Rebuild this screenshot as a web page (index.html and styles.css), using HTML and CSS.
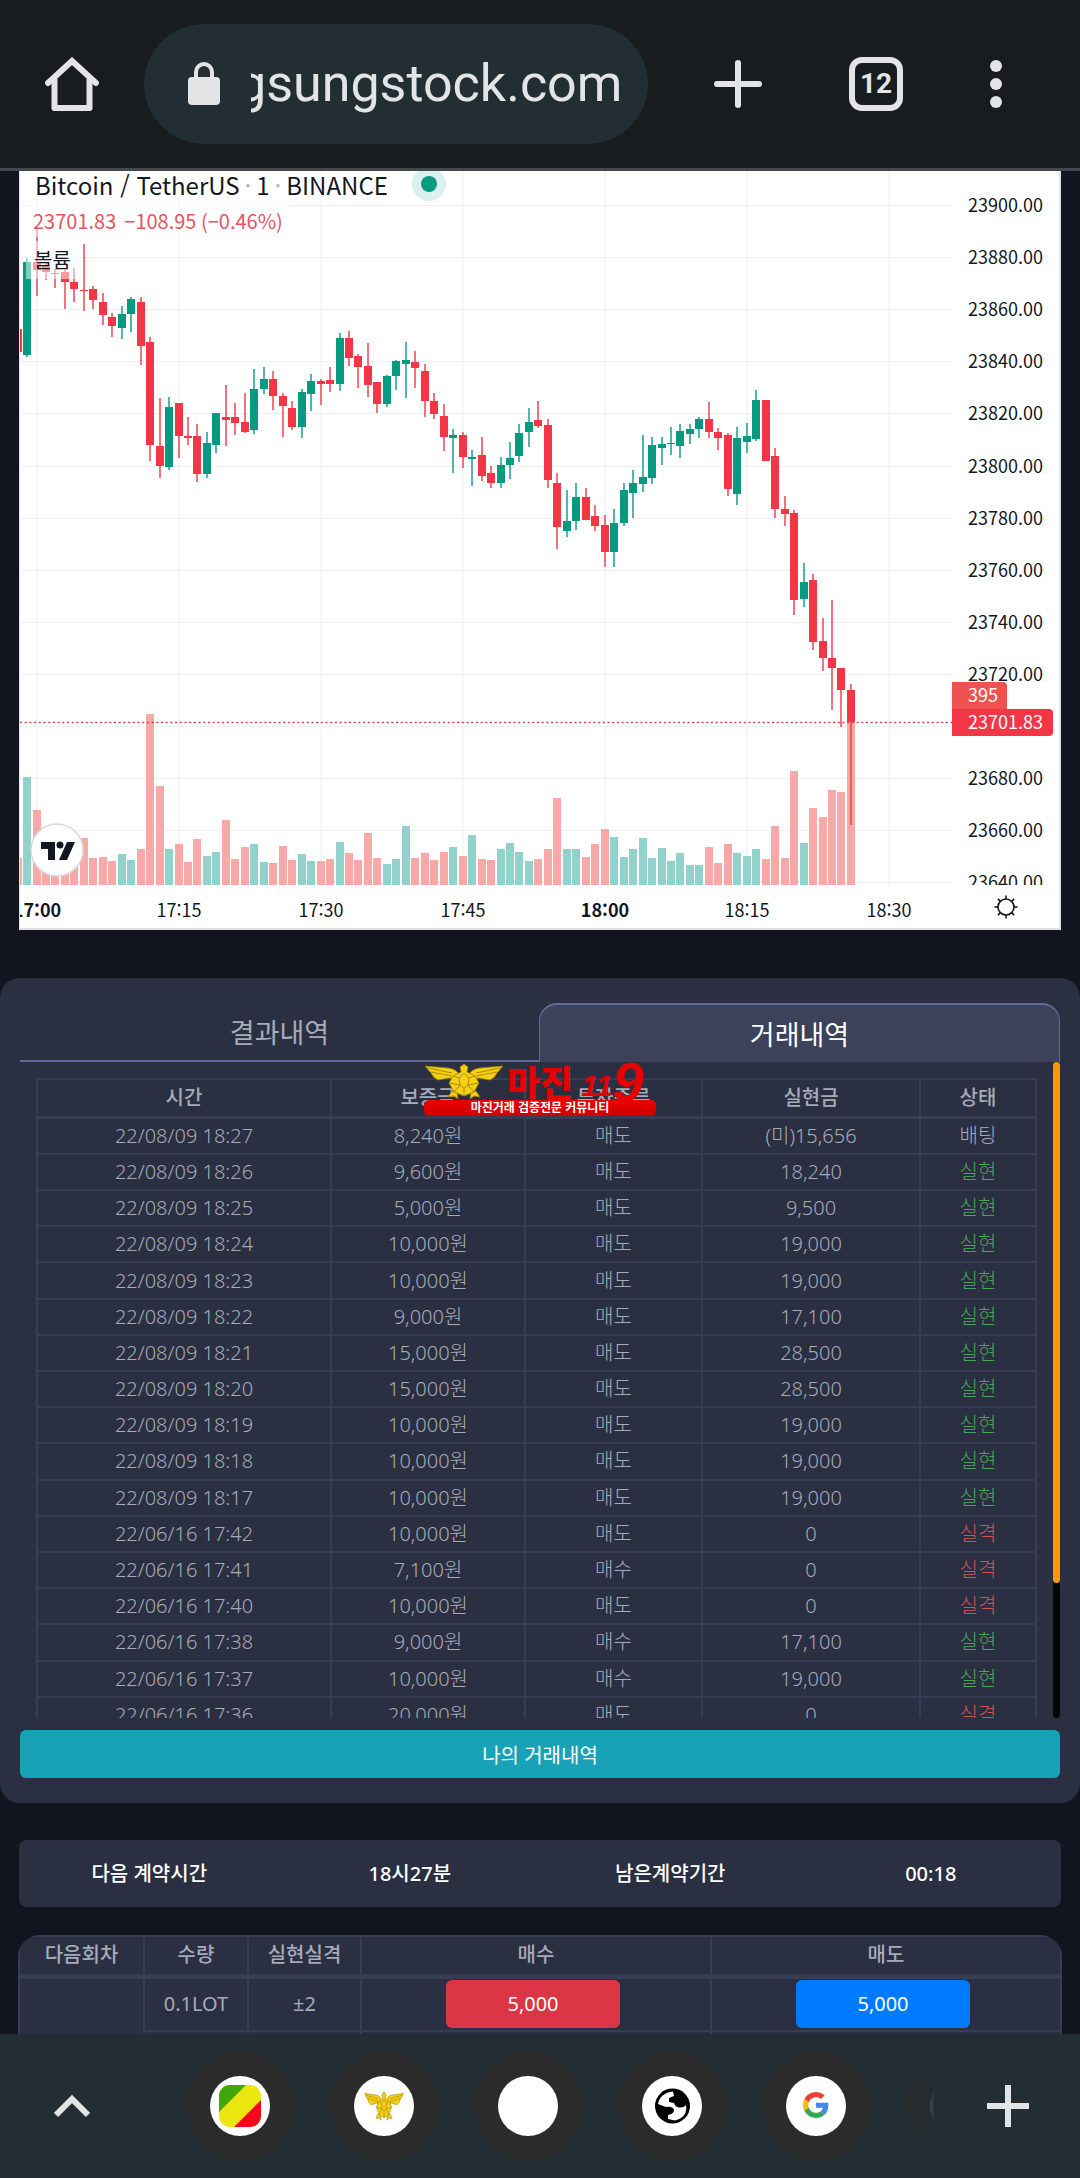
FILE: index.html
```
<!DOCTYPE html>
<html lang="ko">

<head>
    <meta charset="UTF-8">
    <meta name="viewport" content="width=device-width, initial-scale=1.0">
    <title>거래내역</title>
    <link rel="stylesheet" href="styles.css">
</head>

<body>
    <!-- Shared emblem -->
    <svg class="defs" width="0" height="0" aria-hidden="true">
        <symbol id="eagle" viewBox="0 0 80 37" preserveAspectRatio="none">
            <g fill="#f5cf12" stroke="#9c7a08" stroke-width="0.8" stroke-linejoin="round">
                <path d="M1 3 L24 5 Q32 6 35 11 L33 18 L26 15 L14 17 Q9 15 7 10 Z" />
                <path d="M79 3 L56 5 Q48 6 45 11 L47 18 L54 15 L66 17 Q71 15 73 10 Z" />
                <path d="M28 28 L24 34 L30 33 L34 36 L33 29 Z" />
                <path d="M52 28 L56 34 L50 33 L46 36 L47 29 Z" />
                <path d="M36 4 L40 1 L44 4 L43 9 L51 13 L55 20 L50 29 L40 33 L30 29 L25 20 L29 13 L37 9 Z" />
                <path d="M40 10 L45 15 L44 22 L40 25 L36 22 L35 15 Z" />
                <path d="M4 5 L28 10 M7 9 L28 13 M76 5 L52 10 M73 9 L52 13" fill="none" />
                <path d="M29 13 L35 15 M51 13 L45 15 M25 20 L36 22 L30 29 M55 20 L44 22 L50 29 M40 25 V33" fill="none" />
            </g>
        </symbol>
    </svg>

    <!-- Address bar -->
    <header class="top-bar">
        <button class="icon-btn" aria-label="홈">
            <svg width="54" height="54" viewBox="0 0 54 54" fill="none" stroke="#e3e4e6" stroke-width="6">
                <path d="M3 26 L27 4 L51 26" stroke-linecap="round" />
                <path d="M9.500 22 V51 H44.500 V22" stroke-linejoin="round" />
            </svg>
        </button>
        <div class="url-box">
            <svg width="32" height="44" viewBox="0 0 32 44">
                <rect x="0" y="15" width="32" height="28" rx="4" fill="#e3e4e6" />
                <path d="M8 17 V10 A8 8 0 0 1 24 10 V17" fill="none" stroke="#e3e4e6" stroke-width="4" />
            </svg>
            <input class="url-input" type="text" aria-label="주소" value="gsungstock.com">
        </div>
        <div class="top-actions">
            <button class="icon-btn" aria-label="새 탭">
                <svg width="48" height="48" viewBox="0 0 48 48" stroke="#e3e4e6" stroke-width="6" stroke-linecap="round">
                    <path d="M24 3 V45 M3 24 H45" />
                </svg>
            </button>
            <button class="tab-count">12</button>
            <button class="icon-btn" aria-label="메뉴">
                <svg width="12" height="48" viewBox="0 0 12 48" fill="#e3e4e6">
                    <circle cx="6" cy="6" r="6" />
                    <circle cx="6" cy="24" r="6" />
                    <circle cx="6" cy="42" r="6" />
                </svg>
            </button>
        </div>
    </header>

    <main class="page">
        <!-- Chart -->
        <section class="chart">
            <svg id="chartSvg" viewBox="0 0 1039 757"></svg>
            <div class="legend">
                <div class="legend-title">Bitcoin / TetherUS <i>·</i> 1 <i>·</i> BINANCE <span class="live-dot"></span></div>
                <div class="legend-price"><span>23701.83</span><span>−108.95 (−0.46%)</span></div>
                <div class="legend-volume">볼륨</div>
            </div>
        </section>

        <!-- History -->
        <section class="history">
            <div class="tabs">
                <button class="tab">결과내역</button>
                <button class="tab active">거래내역</button>
            </div>
            <div class="history-body">
                <div class="history-scroll">
                    <table class="history-table">
                        <thead>
                            <tr>
                                <th class="col-time">시간</th>
                                <th class="col-deposit">보증금</th>
                                <th class="col-type">투자종류</th>
                                <th class="col-profit">실현금</th>
                                <th>상태</th>
                            </tr>
                        </thead>
                        <tbody id="historyRows"></tbody>
                    </table>
                </div>
                <div class="scroll-track"><div class="scroll-thumb"></div></div>
            </div>
            <button class="my-history">나의 거래내역</button>

            <div class="watermark">
                <div class="watermark-top">
                    <svg width="80" height="37"><use href="#eagle" /></svg>
                    <span class="watermark-name">마진</span>
                    <span class="watermark-11">11</span>
                    <span class="watermark-9">9</span>
                </div>
                <div class="watermark-bar">마진거래 검증전문 커뮤니티</div>
            </div>
        </section>

        <!-- Next contract -->
        <section class="contract">
            <span>다음 계약시간</span>
            <span>18시27분</span>
            <span>남은계약기간</span>
            <span>00:18</span>
        </section>

        <!-- Order table -->
        <section class="order">
            <table class="order-table">
                <thead>
                    <tr>
                        <th class="col-round">다음회차</th>
                        <th class="col-lot">수량</th>
                        <th class="col-tick">실현실격</th>
                        <th>매수</th>
                        <th>매도</th>
                    </tr>
                </thead>
                <tbody>
                    <tr>
                        <td rowspan="2"></td>
                        <td>0.1LOT</td>
                        <td>±2</td>
                        <td class="order-cell"><button class="order-btn buy">5,000</button></td>
                        <td class="order-cell"><button class="order-btn sell">5,000</button></td>
                    </tr>
                    <tr>
                        <td></td>
                        <td></td>
                        <td class="order-cell"><button class="order-btn buy" aria-label="매수"></button></td>
                        <td class="order-cell"><button class="order-btn sell" aria-label="매도"></button></td>
                    </tr>
                </tbody>
            </table>
        </section>
    </main>

    <!-- Tab strip -->
    <nav class="bottom-bar">
        <button class="icon-btn" aria-label="펼치기">
            <svg width="36" height="24" viewBox="0 0 36 24" fill="none" stroke="#e3e4e6" stroke-width="6">
                <path d="M2 21 L18 5 L34 21" />
            </svg>
        </button>
        <div class="sites">
            <button class="site" aria-label="사이트 1">
                <svg width="60" height="60" viewBox="0 0 60 60">
                    <circle cx="30" cy="30" r="30" fill="#fff" />
                    <clipPath id="flagClip"><rect x="9" y="9" width="42" height="42" rx="11" /></clipPath>
                    <g clip-path="url(#flagClip)">
                        <rect x="9" y="9" width="42" height="42" fill="#ebe60f" />
                        <path d="M9 9 H36 L9 36 Z" fill="#41a60a" />
                        <path d="M51 24 V51 H24 Z" fill="#f7061d" />
                    </g>
                </svg>
            </button>
            <button class="site" aria-label="사이트 2">
                <svg width="60" height="60" viewBox="0 0 60 60">
                    <circle cx="30" cy="30" r="30" fill="#fff" />
                    <use href="#eagle" x="10" y="15" width="40" height="30" />
                </svg>
            </button>
            <button class="site" aria-label="사이트 3">
                <svg width="60" height="60" viewBox="0 0 60 60">
                    <circle cx="30" cy="30" r="30" fill="#fff" />
                </svg>
            </button>
            <button class="site" aria-label="사이트 4">
                <svg width="60" height="60" viewBox="0 0 60 60">
                    <circle cx="30" cy="30" r="30" fill="#fff" />
                    <circle cx="30.500" cy="30" r="17.500" fill="#000" />
                    <path d="M16 28 Q18 17 31 15.500 L32 20 L27 22 V26 L32 27 Q33 31 37 31.500 Q42 32 44 29 Q46 41 33 44.500 L26 43 V39 Q32 38 32 34 Q31 30 24 31 Z" fill="#fff" />
                </svg>
            </button>
            <button class="site" aria-label="Google">
                <svg width="60" height="60" viewBox="0 0 60 60">
                    <circle cx="30" cy="30" r="30" fill="#fff" />
                    <g transform="translate(17 16) scale(0.540)">
                        <path fill="#e94335" d="M24 9.500c3.540 0 6.710 1.220 9.210 3.600l6.850-6.850C35.900 2.380 30.470 0 24 0 14.620 0 6.510 5.380 2.560 13.220l7.980 6.190C12.430 13.720 17.740 9.500 24 9.500z" />
                        <path fill="#4285f4" d="M46.980 24.550c0-1.570-.15-3.090-.38-4.550H24v9.020h12.940c-.58 2.960-2.260 5.480-4.780 7.180l7.730 6c4.510-4.180 7.090-10.360 7.090-17.650z" />
                        <path fill="#fbbc05" d="M10.530 28.590c-.48-1.450-.76-2.990-.76-4.590s.27-3.140.76-4.590l-7.980-6.190C.92 16.460 0 20.120 0 24c0 3.880.92 7.540 2.560 10.780l7.970-6.190z" />
                        <path fill="#34a853" d="M24 48c6.480 0 11.930-2.130 15.890-5.810l-7.730-6c-2.150 1.450-4.920 2.300-8.160 2.300-6.260 0-11.570-4.220-13.470-9.910l-7.980 6.190C6.510 42.620 14.620 48 24 48z" />
                    </g>
                </svg>
            </button>
            <button class="site" aria-label="사이트 6">
                <svg width="60" height="60" viewBox="0 0 60 60">
                    <circle cx="30" cy="30" r="30" fill="#fff" />
                </svg>
            </button>
        </div>
        <button class="icon-btn" aria-label="추가">
            <svg width="42" height="42" viewBox="0 0 42 42" stroke="#e3e4e6" stroke-width="6">
                <path d="M21 0 V42 M0 21 H42" />
            </svg>
        </button>
    </nav>

    <script src="script.js"></script>
</body>

</html>
```
FILE: styles.css
```
* {
    box-sizing: border-box;
}

body {
    margin: 0;
    height: 100vh;
    display: flex;
    flex-direction: column;
    overflow: hidden;
    background-color: #12151f;
    color: #a6abb8;
    font-family: "Noto Sans", "Noto Sans CJK KR", sans-serif;
    font-size: 20px;
}

button {
    font: inherit;
    border: none;
    padding: 0;
    background: none;
    color: inherit;
    cursor: pointer;
}

svg {
    display: block;
}

.defs {
    position: absolute;
}

/* Address bar */
.top-bar {
    flex: none;
    display: flex;
    align-items: center;
    height: 171px;
    padding: 0 78px 0 45px;
    background-color: #181c1f;
    border-bottom: 3px solid #41494f;
}

.url-box {
    flex: 1;
    display: flex;
    align-items: center;
    min-width: 0;
    height: 120px;
    margin-left: 45px;
    padding: 0 20px 0 44px;
    gap: 31px;
    border-radius: 60px;
    background-color: #222e34;
}

.url-box svg {
    flex: none;
}

.url-input {
    flex: 1;
    min-width: 0;
    padding: 0;
    border: none;
    outline: none;
    background: none;
    color: #e3e4e6;
    font-family: Roboto, sans-serif;
    font-size: 52px;
    line-height: 64px;
    text-indent: -14px;
}

.top-actions {
    display: flex;
    align-items: center;
    gap: 87px;
    margin-left: 66px;
}

.tab-count {
    width: 54px;
    height: 54px;
    border: 6px solid #e3e4e6;
    border-radius: 13px;
    color: #e3e4e6;
    font-family: Roboto, sans-serif;
    font-size: 28px;
    font-weight: bold;
    line-height: 42px;
}

.page {
    flex: 1;
    min-height: 0;
    overflow: hidden;
}

/* Chart */
.chart {
    position: relative;
    margin: 0 19px 48px;
    border: solid #dfe1e6;
    border-width: 0 2px 2px 1px;
    background-color: #fff;
    color: #131722;
    font-family: "Noto Sans CJK KR", sans-serif;
}

.chart svg {
    width: 100%;
    height: auto;
    font-size: 18px;
}

.chart text {
    fill: #131722;
}

.chart .axis-bold {
    font-weight: bold;
}

.chart .tag-text {
    fill: #fff;
}

.legend {
    position: absolute;
    top: 0;
    left: 6px;
    display: flex;
    flex-direction: column;
    align-items: flex-start;
}

.legend > div {
    padding: 0 8px;
    background-color: rgba(255, 255, 255, 0.5);
}

.legend .legend-title {
    display: flex;
    align-items: center;
    gap: 5px;
    height: 26px;
    padding-left: 9px;
    font-size: 24px;
}

.legend-title i {
    color: #b2b5be;
    font-style: normal;
}

.live-dot {
    width: 16px;
    height: 16px;
    margin-left: 28px;
    border-radius: 50%;
    background-color: #089981;
    box-shadow: 0 0 0 9px #dcf1ee;
}

.legend .legend-price {
    display: flex;
    gap: 8px;
    margin-top: 8px;
    padding-left: 7px;
    line-height: 32px;
    color: #e65561;
}

.legend .legend-volume {
    margin-top: 4px;
    line-height: 38px;
}

/* History card */
.history {
    position: relative;
    padding: 25px 20px;
    border-radius: 20px;
    background-color: #2b2f42;
}

.tabs {
    display: flex;
}

.tab {
    flex: 1;
    height: 59px;
    border-bottom: 2px solid #5d6b98;
    font-size: 27px;
}

.tab.active {
    border: 1px solid #5d6b98;
    border-width: 2px 1px 0;
    border-radius: 18px 18px 0 0;
    background-color: #3b425a;
    color: #fff;
}

.history-body {
    display: flex;
    height: 656px;
}

.history-scroll {
    flex: 1;
    padding: 16px 16px 0;
    overflow: hidden;
}

.history-table,
.order-table {
    width: 100%;
    border-collapse: collapse;
    table-layout: fixed;
    text-align: center;
}

.history-table {
    height: 656px;
}

.history-table th {
    height: 38px;
}

.history-table td {
    font-weight: 300;
}

th,
td {
    padding: 0;
    border: 2px solid #373d54;
    line-height: 24px;
}

th {
    font-weight: 500;
}

thead tr {
    border-bottom: 3px solid #373d54;
}

.col-time {
    width: 294px;
}

.col-deposit {
    width: 194px;
}

.col-type {
    width: 177px;
}

.col-profit {
    width: 218px;
}

.win {
    color: #4aa559;
}

.lose {
    color: #d05252;
}

.scroll-track {
    width: 7px;
    border-radius: 4px;
    background-color: #05060a;
}

.scroll-thumb {
    height: 521px;
    border-radius: 4px;
    background-color: #ff9800;
}

.my-history {
    display: block;
    width: 100%;
    height: 48px;
    margin-top: 12px;
    border-radius: 6px;
    background-color: #18a2b8;
    color: #fff;
}

.watermark {
    position: absolute;
    top: 84px;
    left: 50%;
    width: 232px;
    margin-left: -116px;
}

.watermark-top {
    display: flex;
    align-items: center;
    height: 38px;
    color: #e60000;
    font-weight: 900;
}

.watermark-name {
    margin-left: 3px;
    font-size: 36px;
}

.watermark-11,
.watermark-9 {
    font-family: "Liberation Sans", sans-serif;
    font-style: italic;
    font-weight: bold;
}

.watermark-11 {
    align-self: flex-end;
    margin-left: 8px;
    font-size: 30px;
    line-height: 28px;
}

.watermark-9 {
    font-size: 56px;
}

.watermark-bar {
    height: 16px;
    border-radius: 5px;
    background: linear-gradient(#ee0000, #cc0000);
    color: #fff;
    font-size: 12px;
    font-weight: bold;
    line-height: 16px;
    text-align: center;
}

/* Next contract */
.contract {
    display: flex;
    margin: 37px 19px 28px;
    border-radius: 8px;
    background-color: #2b2f42;
    color: #fff;
    font-weight: 500;
    line-height: 67px;
    text-align: center;
}

.contract span {
    flex: 1;
}

/* Order table */
.order {
    margin: 0 18px;
    border-radius: 22px 22px 0 0;
    background-color: #2b2f42;
    overflow: hidden;
}

.order-table th {
    height: 40px;
    border-bottom-width: 5px;
}

.order-table td {
    height: 55px;
}

.order-table .order-cell {
    padding-right: 6px;
}

.col-round {
    width: 125px;
}

.col-lot {
    width: 104px;
}

.col-tick {
    width: 113px;
}

.order-btn {
    display: block;
    width: 51%;
    height: 48px;
    margin: 0 auto;
    border-radius: 6px;
    color: #fff;
}

.buy {
    background-color: #dc3545;
}

.sell {
    background-color: #007bff;
}

/* Tab strip */
.bottom-bar {
    flex: none;
    display: flex;
    align-items: center;
    height: 144px;
    padding: 0 51px 0 54px;
    background-color: #222e34;
}

.sites {
    flex: 1;
    display: flex;
    gap: 36px;
    min-width: 0;
    margin: 0 52px 0 96px;
    overflow: hidden;
    mask-image: linear-gradient(to left, transparent, #000 36px);
}

.site {
    flex: none;
    display: flex;
    align-items: center;
    justify-content: center;
    width: 108px;
    height: 108px;
    border-radius: 50%;
    background-color: #2b2b2b;
}
```
FILE: script.js
```
const UP = '#089981';
const DOWN = '#f23645';
const UP_VOLUME = '#92d2cc';
const DOWN_VOLUME = '#f7a9a7';
const PLOT_WIDTH = 932;
const PLOT_HEIGHT = 714;

// one candle a minute from 16:58: direction, high, body top, body bottom, low, volume
const candles = [
    ['d', 158, 158, 181, 181, 27], ['u', 87, 91, 184, 186, 108], ['d', 57, 91, 99, 125, 75],
    ['d', 92, 94, 101, 109, 30], ['d', 98, 102, 103, 117, 24], ['d', 99, 101, 111, 138, 24],
    ['d', 97, 111, 118, 131, 26], ['d', 73, 119, 120, 140, 47], ['d', 115, 118, 129, 138, 27],
    ['d', 122, 131, 144, 154, 28], ['d', 142, 146, 155, 166, 24], ['u', 135, 143, 157, 168, 31],
    ['u', 126, 128, 143, 161, 25], ['d', 126, 131, 175, 194, 36], ['d', 166, 171, 274, 290, 171],
    ['d', 227, 275, 295, 307, 99], ['u', 226, 236, 296, 299, 36], ['d', 232, 232, 265, 287, 41],
    ['d', 246, 265, 267, 274, 23], ['d', 253, 265, 303, 311, 46], ['u', 261, 272, 303, 307, 29],
    ['u', 242, 242, 274, 282, 33], ['d', 214, 246, 249, 275, 65], ['d', 232, 246, 252, 264, 26],
    ['d', 222, 251, 261, 262, 38], ['u', 198, 218, 259, 263, 41], ['u', 196, 208, 218, 223, 23],
    ['d', 200, 208, 225, 239, 22], ['d', 222, 225, 235, 266, 39], ['d', 230, 237, 256, 259, 25],
    ['u', 218, 221, 256, 267, 31], ['u', 203, 210, 223, 240, 24], ['d', 208, 210, 213, 234, 24],
    ['d', 196, 209, 213, 221, 26], ['u', 162, 167, 213, 220, 43], ['d', 160, 167, 187, 195, 32],
    ['d', 183, 185, 196, 217, 25], ['d', 172, 195, 214, 226, 52], ['d', 211, 211, 233, 242, 27],
    ['u', 204, 205, 233, 236, 21], ['u', 189, 190, 205, 219, 26], ['u', 171, 189, 193, 227, 59],
    ['d', 180, 191, 197, 217, 27], ['d', 193, 200, 230, 246, 32], ['d', 222, 230, 243, 248, 25],
    ['d', 233, 245, 266, 280, 33], ['u', 258, 264, 267, 302, 38], ['d', 261, 264, 286, 297, 29],
    ['u', 279, 286, 288, 315, 50], ['d', 266, 284, 305, 310, 26], ['d', 295, 302, 312, 317, 25],
    ['u', 286, 294, 312, 317, 36], ['u', 271, 287, 294, 308, 42], ['u', 253, 262, 285, 291, 33],
    ['u', 237, 251, 261, 276, 24], ['d', 230, 249, 255, 257, 26], ['d', 248, 254, 309, 317, 36],
    ['d', 302, 312, 356, 378, 87], ['u', 319, 350, 360, 366, 36], ['u', 312, 326, 350, 359, 36],
    ['d', 317, 326, 349, 349, 28], ['d', 334, 345, 355, 360, 41], ['d', 344, 354, 381, 396, 56],
    ['u', 338, 352, 381, 396, 48], ['u', 312, 319, 352, 355, 28], ['u', 299, 312, 322, 347, 36],
    ['u', 264, 306, 313, 321, 47], ['u', 266, 274, 307, 313, 27], ['u', 266, 273, 277, 294, 37],
    ['u', 256, 272, 273, 284, 24], ['u', 253, 260, 275, 287, 32], ['u', 253, 258, 263, 273, 20],
    ['u', 246, 248, 258, 267, 20], ['d', 231, 248, 261, 267, 38], ['d', 257, 261, 267, 279, 22],
    ['d', 262, 264, 318, 325, 41], ['u', 256, 267, 323, 334, 32], ['u', 252, 265, 271, 282, 29],
    ['u', 219, 229, 268, 270, 36], ['d', 229, 229, 290, 290, 26], ['d', 277, 285, 338, 347, 59],
    ['d', 325, 338, 343, 355, 27], ['d', 339, 342, 429, 444, 114], ['u', 392, 411, 428, 436, 42],
    ['d', 403, 409, 471, 479, 77], ['d', 447, 470, 487, 500, 68], ['d', 429, 487, 497, 539, 95],
    ['d', 497, 497, 519, 556, 93], ['d', 513, 519, 551, 654, 163]
];

const times = ['17:00', '17:15', '17:30', '17:45', '18:00', '18:15', '18:30'];
const minuteX = minute => 16.5 + minute * 9.47;
const priceY = price => 34 + (23900 - price) * 2.605;

function drawChart() {
    let grid = '';
    let labels = '';
    let volumes = '';
    let bodies = '';

    for (let price = 23900; price >= 23640; price -= 20) {
        const y = Math.round(priceY(price));
        grid += `<path d="M0 ${y}.5H${PLOT_WIDTH}"/>`;
        if (price !== 23700) {
            labels += `<text x="948" y="${y + 7}">${price}.00</text>`;
        }
    }

    times.forEach((time, i) => {
        const x = Math.round(minuteX(i * 15));
        const bold = time.endsWith(':00') ? ' class="axis-bold"' : '';
        grid += `<path d="M${x} 0V${PLOT_HEIGHT}"/>`;
        labels += `<text${bold} x="${x}" y="746" text-anchor="middle">${time}</text>`;
    });

    candles.forEach(([dir, high, top, bottom, low, volume], i) => {
        const x = Math.round(minuteX(i - 2));
        const color = dir === 'u' ? UP : DOWN;
        const volumeColor = dir === 'u' ? UP_VOLUME : DOWN_VOLUME;
        volumes += `<rect x="${x - 4}" y="${PLOT_HEIGHT - volume}" width="8" height="${volume}" fill="${volumeColor}"/>`;
        bodies += `<rect x="${x - 0.7}" y="${high}" width="1.4" height="${low - high}" fill="${color}"/>`;
        bodies += `<rect x="${x - 4}" y="${top}" width="8" height="${bottom - top}" fill="${color}"/>`;
    });

    let rays = '';
    for (let a = 0; a < 360; a += 45) {
        rays += `<path d="M0 -8V-11.500" transform="rotate(${a})"/>`;
    }

    document.getElementById('chartSvg').innerHTML = `
        <g stroke="#eef0f1" stroke-width="1.2">${grid}</g>
        <g>${volumes}${bodies}</g>
        <path d="M0 551.5H${PLOT_WIDTH}" stroke="#c9434f" stroke-width="1.6" stroke-dasharray="2 2.700"/>
        ${labels}
        <rect x="${PLOT_WIDTH}" y="${PLOT_HEIGHT}" width="106" height="12" fill="#fff"/>
        <path d="M932 511h51a4 4 0 0 1 4 4v23h-55z" fill="#ef5350"/>
        <path d="M932 538h97a4 4 0 0 1 4 4v19a4 4 0 0 1-4 4h-97z" fill="${DOWN}"/>
        <text class="tag-text" x="948" y="531">395</text>
        <text class="tag-text" x="948" y="558">23701.83</text>
        <circle cx="37" cy="679" r="26" fill="#fff" stroke="#d9dadd" stroke-width="1.500"/>
        <g fill="#131722">
            <path d="M21 671H35V689H28V678H21Z"/>
            <circle cx="40" cy="674" r="3.500"/>
            <path d="M47 671H55L47 689H39Z"/>
        </g>
        <g transform="translate(986 736)" fill="none" stroke="#131722" stroke-width="1.600">
            <circle r="8"/>${rays}
        </g>`;
}

const rows = [
    ['22/08/09 18:27', '8,240원', '매도', '(미)15,656', '배팅'],
    ['22/08/09 18:26', '9,600원', '매도', '18,240', '실현'],
    ['22/08/09 18:25', '5,000원', '매도', '9,500', '실현'],
    ['22/08/09 18:24', '10,000원', '매도', '19,000', '실현'],
    ['22/08/09 18:23', '10,000원', '매도', '19,000', '실현'],
    ['22/08/09 18:22', '9,000원', '매도', '17,100', '실현'],
    ['22/08/09 18:21', '15,000원', '매도', '28,500', '실현'],
    ['22/08/09 18:20', '15,000원', '매도', '28,500', '실현'],
    ['22/08/09 18:19', '10,000원', '매도', '19,000', '실현'],
    ['22/08/09 18:18', '10,000원', '매도', '19,000', '실현'],
    ['22/08/09 18:17', '10,000원', '매도', '19,000', '실현'],
    ['22/06/16 17:42', '10,000원', '매도', '0', '실격'],
    ['22/06/16 17:41', '7,100원', '매수', '0', '실격'],
    ['22/06/16 17:40', '10,000원', '매도', '0', '실격'],
    ['22/06/16 17:38', '9,000원', '매수', '17,100', '실현'],
    ['22/06/16 17:37', '10,000원', '매수', '19,000', '실현'],
    ['22/06/16 17:36', '20,000원', '매도', '0', '실격']
];
const statusClass = { '실현': 'win', '실격': 'lose', '배팅': '' };

function drawRows() {
    document.getElementById('historyRows').innerHTML = rows.map(row => {
        const cells = row.slice(0, 4).map(value => `<td>${value}</td>`).join('');
        return `<tr>${cells}<td class="${statusClass[row[4]]}">${row[4]}</td></tr>`;
    }).join('');
}

drawChart();
drawRows();
```
